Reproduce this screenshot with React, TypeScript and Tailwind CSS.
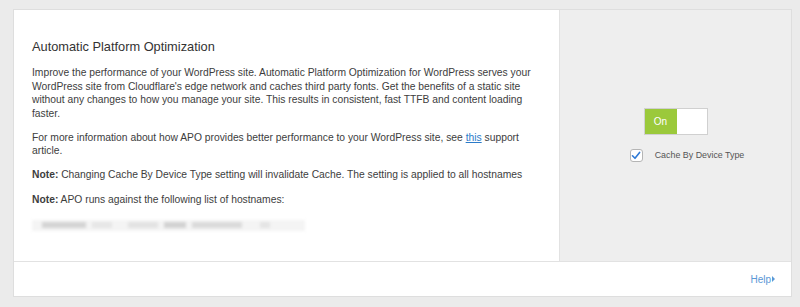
import React from "react";

export default function App() {
  return (
    <div
      className="w-[800px] h-[307px] bg-[#ebebeb] pt-[9px] pl-[13px] pr-[8px]"
      style={{ fontFamily: '"Liberation Sans", Arial, sans-serif' }}
    >
      <div className="border border-[#dedede] bg-white flex flex-col">
        <div className="flex h-[251px]">
          <div className="w-[545px] bg-white pl-[18px] pr-[12px] pt-[27px] text-[10.3px] leading-[13.5px] text-[#3d3d3d]">
            <h2 className="text-[12.8px] leading-[20px] text-[#333] mb-[9px]">
              Automatic Platform Optimization
            </h2>
            <p className="mb-[10.5px]">
              Improve the performance of your WordPress site. Automatic Platform Optimization for WordPress serves your
              WordPress site from Cloudflare's edge network and caches third party fonts. Get the benefits of a static site
              without any changes to how you manage your site. This results in consistent, fast TTFB and content loading
              faster.
            </p>
            <p className="mb-[10.5px]">
              For more information about how APO provides better performance to your WordPress site, see{" "}
              <a href="#" className="text-[#2b7bc9] underline">
                this
              </a>{" "}
              support article.
            </p>
            <p className="mb-[11.5px]">
              <b className="font-bold">Note:</b> Changing Cache By Device Type setting will invalidate Cache. The setting
              is applied to all hostnames
            </p>
            <p className="mb-[13px]">
              <b className="font-bold">Note:</b> APO runs against the following list of hostnames:
            </p>
            <div className="flex items-center gap-[6px] h-[11px] w-[273px] bg-[#f4f4f4] blur-[1.5px] px-[10px]">
              <span className="w-[44px] h-[6px] bg-[#d4d4d4]" />
              <span className="w-[20px] h-[6px] bg-[#e6e6e6]" />
              <span className="w-[30px] h-[6px] bg-[#e2e2e2] ml-[10px]" />
              <span className="w-[22px] h-[6px] bg-[#d2d2d2]" />
              <span className="w-[50px] h-[6px] bg-[#dadada]" />
              <span className="w-[10px] h-[6px] bg-[#e4e4e4] ml-[12px]" />
            </div>
          </div>
          <div className="flex-1 bg-[#eeeeee] border-l border-[#e2e2e2] flex flex-col items-center pt-[98px]">
            <div className="flex w-[64px] h-[27px] border border-[#d0d0d0] bg-white">
              <div className="w-[32px] bg-[#9bc93b] text-white text-[10px] flex items-center justify-center">On</div>
              <div className="flex-1 bg-white" />
            </div>
            <div className="flex items-center mt-[14px] ml-[23px] gap-[12px]">
              <span className="w-[13px] h-[13px] rounded-[3px] border border-[#b5b5b5] bg-white flex items-center justify-center">
                <svg width="10" height="9" viewBox="0 0 10 9">
                  <path d="M1.5 4.8 L4 7.3 L8.6 1.4" fill="none" stroke="#2f7ad6" strokeWidth="1.6" strokeLinecap="round" strokeLinejoin="round" />
                </svg>
              </span>
              <span className="text-[8.9px] text-[#555]">Cache By Device Type</span>
            </div>
          </div>
        </div>
        <div className="h-[35px] border-t border-[#e2e2e2] bg-white flex items-center justify-end pr-[16px]">
          <a href="#" className="text-[10px] text-[#5b98d6] flex items-center">
            Help
            <span className="ml-[1px] w-0 h-0 border-y-[3px] border-y-transparent border-l-[3px] border-l-[#5b98d6]" />
          </a>
        </div>
      </div>
    </div>
  );
}
